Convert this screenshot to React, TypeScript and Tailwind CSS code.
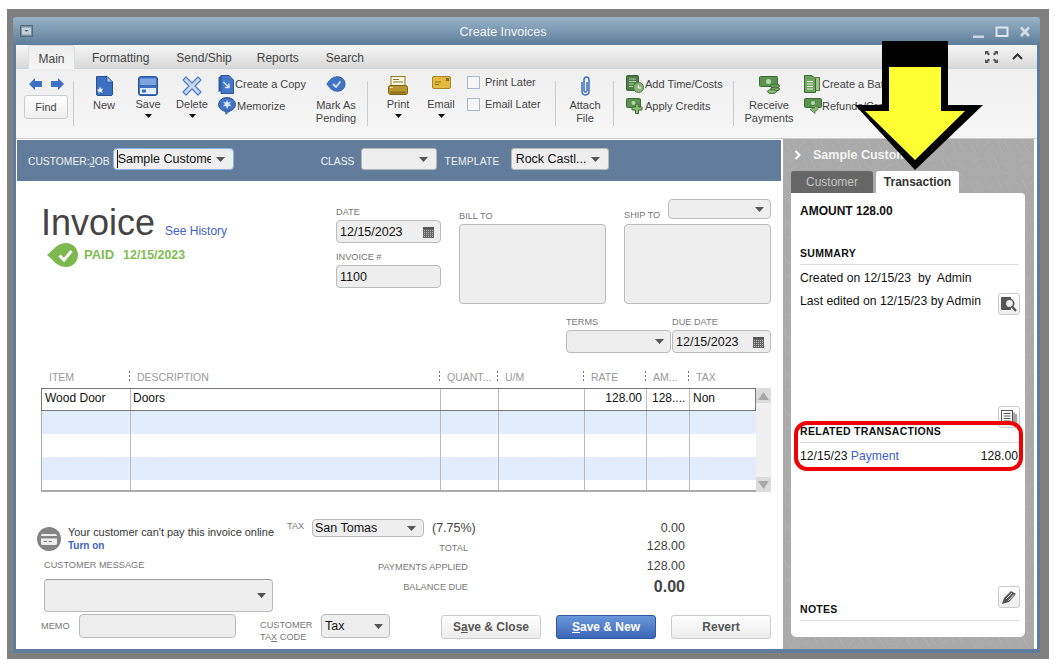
import React from "react";

const Caret = ({ className = "" }: { className?: string }) => (
  <svg width="9" height="5" viewBox="0 0 9 5" className={className}>
    <path d="M0 0H9L4.5 5Z" fill="#555" />
  </svg>
);

const SmallCaret = () => (
  <svg width="7" height="4" viewBox="0 0 7 4" className="mt-[3px]">
    <path d="M0 0H7L3.5 4Z" fill="#111" />
  </svg>
);

const Calendar = () => (
  <svg width="11" height="11" viewBox="0 0 11 11">
    <rect width="11" height="11" fill="#666" />
    <rect y="0" width="11" height="2" fill="#555" />
    {[3, 5, 7, 9].map((y) =>
      [1, 3, 5, 7, 9].map((x) => <rect key={`${x}-${y}`} x={x} y={y} width="1" height="1" fill="#bbb" />)
    )}
  </svg>
);

const Sep = ({ className = "" }: { className?: string }) => (
  <div className={`w-px h-[45px] mt-[12px] bg-[#ccc] shrink-0 ${className}`} />
);

const BlueDoc = () => (
  <svg width="17" height="20" viewBox="0 0 17 20">
    <path d="M.5 .5H11L16.5 6V18a1.5 1.5 0 0 1-1.5 1.5H2A1.5 1.5 0 0 1 .5 18Z" fill="#3d6fc0" stroke="#27508f" />
    <path d="M11 .5V6H16.5Z" fill="#a9c4e8" stroke="#27508f" strokeWidth=".6" />
    <path d="M4 10.5L4.8 13 7.4 12.6 5.6 14.4 6.8 17 4.2 15.8 2.4 17.6 2.6 15 .6 13.8 3 13.4Z" fill="#fff" />
  </svg>
);

const Floppy = () => (
  <svg width="20" height="20" viewBox="0 0 20 20">
    <rect x=".5" y=".5" width="19" height="19" rx="2.5" fill="#3b6fc4" stroke="#2a5597" />
    <rect x="2" y="2.5" width="16" height="6.5" fill="#7fa5dd" />
    <rect x="2" y="12" width="16" height="6" fill="#e7eef9" />
    <rect x="4" y="13.5" width="4" height="3" fill="#3b6fc4" />
  </svg>
);

const XIcon = () => (
  <svg width="20" height="20" viewBox="0 0 20 20">
    <path d="M4 1L10 7 16 1 19 4 13 10 19 16 16 19 10 13 4 19 1 16 7 10 1 4Z" fill="#c6d9f3" stroke="#4b7cc4" strokeWidth="1.2" strokeLinejoin="round" />
  </svg>
);

const CopyIcon = () => (
  <svg width="16" height="19" viewBox="0 0 16 19">
    <path d="M.5 2.5L3 .5V16L.5 17Z" fill="#2f5ea8" />
    <path d="M3 .5H11L15.5 5V18.5H3Z" fill="#4478c8" stroke="#2a5597" />
    <path d="M5.5 7L11 12.5M11 8.5V12.5H7" stroke="#dce8f8" strokeWidth="1.4" fill="none" />
  </svg>
);

const MemoIcon = () => (
  <svg width="18" height="18" viewBox="0 0 18 18">
    <ellipse cx="9" cy="7.5" rx="8.5" ry="7" fill="#3f74c4" stroke="#2a5597" />
    <path d="M7 13L8 17.5 12 13.5Z" fill="#3f74c4" stroke="#2a5597" strokeWidth=".6" />
    <path d="M9 2.5L10 5.5 13 4.5 11.2 7 13.5 9 10.5 9 9 12 8 9 4.8 9.4 7 7 5 4.5 8 5.5Z" fill="#dce8f8" />
  </svg>
);

const PendingIcon = () => (
  <svg width="20" height="16" viewBox="0 0 20 16">
    <path d="M1 8C3 5 6 1 11 .8 15 .6 19 3 19 8 19 13 15 15.4 11 15.2 6 15 3 11 1 8Z" fill="#3f74c4" stroke="#2f5ea8" />
    <path d="M7 8L10 11 14.5 5.5" stroke="#d6e4f7" strokeWidth="1.8" fill="none" />
  </svg>
);

const PrintIcon = () => (
  <svg width="20" height="20" viewBox="0 0 20 20">
    <rect x="3" y=".5" width="14" height="10" fill="#fdf6d8" stroke="#97761e" />
    <path d="M5 3.5H11M5 6H15" stroke="#8a7640" />
    <rect x=".5" y="9.5" width="19" height="9" rx="2" fill="#b8952e" stroke="#7a6118" />
    <rect x="2" y="11" width="3" height="1" fill="#f4e6a8" />
    <rect x="2" y="15.5" width="16" height="2" fill="#8c7020" />
  </svg>
);

const EnvelopeIcon = () => (
  <svg width="19" height="13" viewBox="0 0 19 13">
    <rect x=".5" y=".5" width="18" height="12" rx="1.5" fill="#e3b93f" stroke="#a68526" />
    <rect x="14" y="2" width="3" height="3" fill="#8c6c14" />
    <path d="M3 6H9M3 8.5H7" stroke="#8c6c14" />
  </svg>
);

const ClipIcon = () => (
  <svg width="13" height="21" viewBox="0 0 13 21">
    <path d="M3 6V15.5C3 20 10 20 10 15.5V4C10 0 5 0 5 4V14.5C5 16.5 8 16.5 8 14.5V6" fill="none" stroke="#3b6fc4" strokeWidth="1.5" />
  </svg>
);

const TimeIcon = () => (
  <svg width="18" height="18" viewBox="0 0 18 18">
    <rect x=".5" y=".5" width="12" height="15" rx="1" fill="#4d7c47" stroke="#38603a" />
    <path d="M3 4H10M3 6.5H10M3 9H8M3 11.5H7" stroke="#b6d3ad" />
    <circle cx="12.5" cy="12.5" r="5" fill="#8ab47a" stroke="#4d7c47" />
    <path d="M12.5 10V13H15" stroke="#fff" fill="none" />
  </svg>
);

const CreditIcon = () => (
  <svg width="18" height="17" viewBox="0 0 18 17">
    <rect x=".5" y=".5" width="14" height="9" rx="1" fill="#5d9350" stroke="#3e6a38" />
    <circle cx="7.5" cy="5" r="2" fill="#b9d6ad" />
    <path d="M9.5 6H12.5V9H16V12H12.5V15.5H9.5V12H6V9H9.5Z" fill="#8abf72" stroke="#3e6a38" />
  </svg>
);

const ReceiveIcon = () => (
  <svg width="21" height="18" viewBox="0 0 21 18">
    <rect x=".5" y=".5" width="18" height="10" rx="1" fill="#5d9350" stroke="#3e6a38" />
    <circle cx="9.5" cy="5.5" r="2.5" fill="#b9d6ad" />
    <ellipse cx="16" cy="10" rx="4.5" ry="2" fill="#6ea35c" stroke="#3e6a38" />
    <ellipse cx="16" cy="13" rx="4.5" ry="2" fill="#6ea35c" stroke="#3e6a38" />
    <ellipse cx="13" cy="15.5" rx="4.5" ry="2" fill="#8abf72" stroke="#3e6a38" />
  </svg>
);

const BatchIcon = () => (
  <svg width="16" height="18" viewBox="0 0 16 18">
    <rect x="11" y="2.5" width="4.5" height="13" fill="#9cc48c" stroke="#4d7c47" />
    <path d="M.5 .5H8L11.5 4V17.5H.5Z" fill="#6ea35c" stroke="#3e6a38" />
    <path d="M3 6.5H9M3 9H9M3 11.5H9M3 14H9" stroke="#eaf3e5" />
  </svg>
);

const RefundIcon = () => (
  <svg width="18" height="16" viewBox="0 0 18 16">
    <rect x=".5" y=".5" width="17" height="9" rx="1" fill="#5d9350" stroke="#3e6a38" />
    <circle cx="9" cy="5" r="2" fill="#b9d6ad" />
    <path d="M5 8H11C15 8 15 13 11 13V15.5L6 11.5 11 9.5" fill="#8abf72" stroke="#3e6a38" strokeWidth=".7" />
  </svg>
);

const Arrow = ({ dir }: { dir: "l" | "r" }) => (
  <svg width="13" height="12" viewBox="0 0 13 12">
    <path d={dir === "l" ? "M0 6L6 0V3H13V9H6V12Z" : "M13 6L7 0V3H0V9H7V12Z"} fill="#3d71c4" />
  </svg>
);

const Col = ({ className, icon, lines, caret }: { className: string; icon: React.ReactNode; lines: string[]; caret?: boolean }) => (
  <div className={`flex flex-col items-center shrink-0 ${className}`}>
    <div className="h-[22px] pt-[7px] flex items-start justify-center box-content">{icon}</div>
    <div className={`${caret ? "mt-0" : "mt-[1px]"} text-[11px] leading-[13px] text-center text-[#444] whitespace-nowrap`}>
      {lines.map((l) => (
        <div key={l}>{l}</div>
      ))}
    </div>
    {caret && <SmallCaret />}
  </div>
);

const Inline = ({ icon, text, iconBox = "w-[19px]" }: { icon: React.ReactNode; text: string; iconBox?: string }) => (
  <div className="flex items-center h-[22px] whitespace-nowrap text-[11px] text-[#444]">
    <div className={`${iconBox} flex justify-start`}>{icon}</div>
    <span>{text}</span>
  </div>
);

const Label = ({ children, className = "" }: { children: React.ReactNode; className?: string }) => (
  <div className={`text-[9.2px] leading-[14px] text-[#777] whitespace-nowrap ${className}`}>{children}</div>
);

const Field = ({ className = "", children }: { className?: string; children?: React.ReactNode }) => (
  <div className={`bg-[#eeeeee] border border-[#bbb] rounded-[4px] flex items-center text-[12.5px] text-[#111] whitespace-nowrap overflow-hidden ${className}`}>
    {children}
  </div>
);

const BarSelect = ({ className, children }: { className: string; children?: React.ReactNode }) => (
  <div className={`h-[22px] bg-[#eeeeee] flex items-center justify-between pr-[8px] text-[12.5px] text-[#111] whitespace-nowrap ${className}`}>
    {children}
    <Caret className="shrink-0 ml-auto" />
  </div>
);

const headCols = ["w-[89px]", "w-[310px]", "w-[58px]", "w-[86px]", "w-[62px]", "w-[43px]", "w-[67px]"];
const rowCols = ["w-[88px]", "w-[310px]", "w-[58px]", "w-[86px]", "w-[62px]", "w-[43px]", "w-[66px]"];
const cellPad = ["pl-[3px]", "pl-[2px]", "", "", "pr-[4px] text-right", "pl-[5px]", "pl-[3px]"];
const heads = ["ITEM", "DESCRIPTION", "QUANT...", "U/M", "RATE", "AM...", "TAX"];
const cells = ["Wood Door", "Doors", "", "", "128.00", "128....", "Non"];

const Dots = () => (
  <div className="absolute left-[-1px] top-[1px] flex flex-col gap-[2px]">
    <div className="w-px h-[2px] bg-[#777]" />
    <div className="w-px h-[2px] bg-[#777]" />
    <div className="w-px h-[2px] bg-[#777]" />
  </div>
);

const TableRow = ({ h, bg }: { h: string; bg: string }) => (
  <div className={`flex ${h} ${bg}`}>
    {rowCols.map((c, i) => (
      <div key={c} className={`${c} ${i > 0 ? "border-l border-[#bbb]" : ""}`} />
    ))}
  </div>
);

const SideButton = ({ children, className = "" }: { children: React.ReactNode; className?: string }) => (
  <div className={`w-[22px] h-[22px] border border-[#ccc] rounded-[3px] bg-gradient-to-b from-white to-[#eee] flex items-center justify-center shrink-0 ${className}`}>
    {children}
  </div>
);

const Heading = ({ children, className = "" }: { children: React.ReactNode; className?: string }) => (
  <div className={`text-[10.5px] leading-[14px] h-[19px] font-bold text-[#111] tracking-[0.3px] border-b border-[#ddd] ${className}`}>
    {children}
  </div>
);

export default function App() {
  return (
    <div className="relative w-[1058px] h-[668px] bg-white pt-[9px] pl-[7px] overflow-hidden font-['Liberation_Sans',Arial,sans-serif]">
      <div className="w-[1042px] h-[650px] bg-[#808080] pt-[8px] pl-[6px]">
        <div className="w-[1027px] h-[636px] bg-[#617d9c] rounded-t-[3px] px-[3px] pb-[4px] flex flex-col">
          {/* title bar */}
          <div className="-mx-[3px] h-[28px] shrink-0 rounded-t-[3px] bg-gradient-to-b from-[#96b3c9] to-[#5f7e9a] flex items-center pl-[7px] pt-[2px] relative">
            <svg width="13" height="12" viewBox="0 0 13 12" className="-mt-[2px]">
              <rect x=".5" y=".5" width="12" height="11" fill="#7d8f9e" stroke="#55697a" />
              <rect x="2" y="2.5" width="9" height="7" fill="#c4d0da" />
              <path d="M4.5 5H8.5L6.5 7Z" fill="#4f6274" />
            </svg>
            <div className="flex-1 text-center text-[12.5px] text-[#f0f4f7]">Create Invoices</div>
            <div className="flex items-center pr-[7px]">
              <svg width="60" height="12" viewBox="0 0 60 12">
                <rect x="0" y="9.5" width="11" height="2.5" fill="#c9d6e0" />
                <rect x="23.5" y="1.5" width="11" height="8.5" fill="none" stroke="#dfe6ec" strokeWidth="2" />
                <path d="M48 1.5L56 10M56 1.5L48 10" stroke="#d3dde5" strokeWidth="2.6" />
              </svg>
            </div>
          </div>

          <div className="flex-1 bg-white flex flex-col min-h-0">
            {/* tabs */}
            <div className="h-[24px] shrink-0 bg-gradient-to-b from-[#f6f6f6] to-[#d9d9d9] flex items-end pl-[12px] text-[12px] text-[#444] relative border-b border-[#c8d3dd]">
              <div className="w-[47px] h-[24px] -mb-px pt-[2px] bg-gradient-to-b from-[#eeeeee] to-[#f5f5f5] border border-b-0 border-[#dcdcdc] rounded-t-[3px] flex items-center justify-center">Main</div>
              <div className="ml-[17px] h-[23px] pt-[2px] flex items-center">Formatting</div>
              <div className="ml-[27px] h-[23px] pt-[2px] flex items-center">Send/Ship</div>
              <div className="ml-[25px] h-[23px] pt-[2px] flex items-center">Reports</div>
              <div className="ml-[27px] h-[23px] pt-[2px] flex items-center">Search</div>
              <div className="ml-auto mr-[14px] h-[23px] flex items-center gap-[14px]">
                <svg width="13" height="12" viewBox="0 0 13 12">
                  <path d="M0 0H4L3 1 5 3 3.5 4.5 1.5 2.5 0 4ZM13 0H9L10 1 8 3 9.5 4.5 11.5 2.5 13 4ZM0 12H4L3 11 5 9 3.5 7.5 1.5 9.5 0 8ZM13 12H9L10 11 8 9 9.5 7.5 11.5 9.5 13 8Z" fill="#555" />
                </svg>
                <svg width="11" height="7" viewBox="0 0 11 7">
                  <path d="M1 6L5.5 1.5 10 6" stroke="#333" strokeWidth="2" fill="none" />
                </svg>
              </div>
            </div>

            {/* toolbar */}
            <div className="h-[69px] shrink-0 bg-gradient-to-b from-[#f0f0f0] to-[#f6f6f6] border-b border-[#ccc] flex items-start pl-[8px] box-content">
              <div className="w-[44px] shrink-0 flex flex-col items-center">
                <div className="mt-[9px] flex gap-[9px] h-[12px]">
                  <Arrow dir="l" />
                  <Arrow dir="r" />
                </div>
                <div className="mt-[5px] w-[44px] h-[24px] pt-px border border-[#ccc] rounded-[3px] bg-gradient-to-b from-white to-[#efefef] text-[11px] text-[#444] flex items-center justify-center">Find</div>
              </div>
              <Sep className="ml-[5px]" />
              <Col className="ml-[10px] w-[40px]" icon={<BlueDoc />} lines={["New"]} />
              <Col className="ml-[4px] w-[40px]" icon={<Floppy />} lines={["Save"]} caret />
              <Col className="ml-[2px] w-[44px]" icon={<XIcon />} lines={["Delete"]} caret />
              <div className="ml-[4px] w-[88px] shrink-0 pt-[4px]">
                <Inline icon={<CopyIcon />} text="Create a Copy" />
                <Inline icon={<MemoIcon />} text="Memorize" />
              </div>
              <Col className="w-[60px]" icon={<PendingIcon />} lines={["Mark As", "Pending"]} />
              <Sep className="ml-[1px]" />
              <Col className="ml-[10px] w-[40px]" icon={<PrintIcon />} lines={["Print"]} caret />
              <Col className="ml-[3px] w-[40px]" icon={<EnvelopeIcon />} lines={["Email"]} caret />
              <div className="ml-[6px] w-[88px] shrink-0 pt-[2px] text-[11px] text-[#444]">
                <div className="flex items-center h-[22px] gap-[5px]">
                  <div className="w-[13px] h-[13px] border border-[#aab7d0] bg-[#f7f7f7]" />
                  <span>Print Later</span>
                </div>
                <div className="flex items-center h-[22px] gap-[5px]">
                  <div className="w-[13px] h-[13px] border border-[#aab7d0] bg-[#f7f7f7]" />
                  <span>Email Later</span>
                </div>
              </div>
              <Sep />
              <Col className="ml-[7px] w-[44px]" icon={<ClipIcon />} lines={["Attach", "File"]} />
              <Sep className="ml-[6px]" />
              <div className="ml-[12px] w-[107px] shrink-0 pt-[4px]">
                <Inline icon={<TimeIcon />} text="Add Time/Costs" />
                <Inline icon={<CreditIcon />} text="Apply Credits" />
              </div>
              <Sep />
              <Col className="ml-[5px] w-[60px]" icon={<ReceiveIcon />} lines={["Receive", "Payments"]} />
              <div className="ml-[5px] shrink-0 pt-[4px]">
                <Inline iconBox="w-[18px]" icon={<BatchIcon />} text="Create a Batch" />
                <Inline iconBox="w-[18px]" icon={<RefundIcon />} text="Refunds/Credits" />
              </div>
            </div>

            {/* body */}
            <div className="flex-1 flex min-h-0 pl-px">
              {/* form */}
              <div className="w-[764px] shrink-0 flex flex-col">
                <div className="mt-px h-[41px] shrink-0 bg-[#627d9c] flex items-start pl-[11px] text-[10.3px] text-[#eef2f6]">
                  <span className="mt-[14px]">
                    CUSTOMER:<span className="underline">J</span>OB
                  </span>
                  <BarSelect className="ml-[3px] mt-[8px] w-[121px] border border-[#8fb3e6] rounded-[4px] pl-[3px]">
                    <span className="w-[94px] overflow-hidden border-l border-[#111]">Sample Customer</span>
                  </BarSelect>
                  <span className="ml-[87px] mt-[14px]">CLASS</span>
                  <BarSelect className="ml-[7px] mt-[8px] w-[76px] border border-[#b5b5b5] rounded-[3px]" />
                  <span className="ml-[7px] mt-[14px] tracking-[0.2px]">TEMPLATE</span>
                  <BarSelect className="ml-[11px] mt-[8px] w-[98px] pl-[4px] border border-[#b5b5b5] rounded-[3px]">
                    <span>Rock Castl...</span>
                  </BarSelect>
                </div>

                <div className="flex-1 pl-[24px] flex flex-col min-h-0">
                  <div className="flex">
                    <div className="w-[295px] shrink-0">
                      <div className="mt-[22px] flex items-baseline gap-[10px]">
                        <span className="text-[36px] leading-[40px] text-[#444]">Invoice</span>
                        <span className="text-[12px] text-[#3f5fc6]">See History</span>
                      </div>
                      <div className="ml-[6px] h-[24px] flex items-center">
                        <svg width="31" height="24" viewBox="0 0 31 24">
                          <path d="M0 12C5 9 9 0 19 0A12 12 0 0 1 19 24C9 24 5 15 0 12Z" fill="#7cb84e" />
                          <path d="M12.5 12.5L17 17 24.5 8" stroke="#fff" strokeWidth="3" fill="none" />
                        </svg>
                        <span className="ml-[6px] text-[13px] font-bold text-[#7fbc52]">PAID</span>
                        <span className="ml-[9px] text-[12.4px] font-bold text-[#7fbc52]">12/15/2023</span>
                      </div>
                    </div>
                    <div className="w-[105px] shrink-0 pt-[24px]">
                      <Label className="mb-px">DATE</Label>
                      <Field className="h-[23px] pl-[3px] pr-[6px] pt-[2px] justify-between">
                        <span>12/15/2023</span>
                        <Calendar />
                      </Field>
                      <Label className="mt-[7px] mb-px">INVOICE #</Label>
                      <Field className="h-[23px] pl-[3px] pt-[2px]">1100</Field>
                    </div>
                    <div className="ml-[18px] w-[147px] shrink-0 pt-[28px]">
                      <Label className="mb-px">BILL TO</Label>
                      <Field className="h-[80px]" />
                    </div>
                    <div className="ml-[18px] w-[147px] shrink-0 pt-[18px]">
                      <div className="h-[25px] flex justify-between items-start">
                        <Label className="mt-[9px]">SHIP TO</Label>
                        <Field className="w-[103px] h-[20px] justify-end pr-[6px]">
                          <Caret />
                        </Field>
                      </div>
                      <Field className="h-[80px]" />
                    </div>
                  </div>

                  {/* terms */}
                  <div className="mt-[11px] ml-[525px] flex gap-[1px]">
                    <div className="w-[105px]">
                      <Label className="mb-px">TERMS</Label>
                      <Field className="h-[23px] justify-end pr-[6px]">
                        <Caret />
                      </Field>
                    </div>
                    <div className="w-[99px]">
                      <Label className="mb-px">DUE DATE</Label>
                      <Field className="h-[23px] pl-[3px] pr-[6px] pt-[2px] justify-between">
                        <span>12/15/2023</span>
                        <Calendar />
                      </Field>
                    </div>
                  </div>

                  {/* table header */}
                  <div className="mt-[17px] flex h-[14px] text-[10.5px] leading-[14px] text-[#999]">
                    {heads.map((h, i) => (
                      <div key={h} className={`${headCols[i]} relative ${i > 0 ? "pl-[7px]" : "pl-[8px]"} whitespace-nowrap`}>
                        {i > 0 && <Dots />}
                        {h}
                      </div>
                    ))}
                  </div>

                  {/* table */}
                  <div className="mt-[4px] flex w-[730px] h-[104px]">
                    <div className="w-[715px] border-l border-b-2 border-t border-[#aaa]">
                      <div className="flex h-[23px] border border-[#777] -ml-px -mt-px bg-white w-[715px] text-[12px] text-[#111] leading-[18px]">
                        {rowCols.map((c, i) => (
                          <div
                            key={c}
                            className={`${c} ${i > 0 ? "border-l border-[#bbb]" : ""} ${cellPad[i]} whitespace-nowrap overflow-hidden`}
                          >
                            {cells[i]}
                          </div>
                        ))}
                      </div>
                      <TableRow h="h-[23px]" bg="bg-[#e1ecfc]" />
                      <TableRow h="h-[23px]" bg="bg-white" />
                      <TableRow h="h-[23px]" bg="bg-[#e1ecfc]" />
                      <TableRow h="h-[10px]" bg="bg-white" />
                    </div>
                    <div className="w-[15px] bg-[#f0f0f0] flex flex-col justify-between">
                      <div className="h-[15px] bg-[#dcdcdc] flex items-center justify-center">
                        <svg width="11" height="8" viewBox="0 0 11 8"><path d="M5.5 0L11 8H0Z" fill="#a8a8a8" /></svg>
                      </div>
                      <div className="h-[15px] bg-[#dcdcdc] flex items-center justify-center">
                        <svg width="11" height="8" viewBox="0 0 11 8"><path d="M5.5 8L11 0H0Z" fill="#a8a8a8" /></svg>
                      </div>
                    </div>
                  </div>

                  {/* footer A */}
                  <div className="flex">
                    <div className="w-[246px] shrink-0">
                      <div className="mt-[33px] -ml-[4px] flex items-center h-[28px]">
                        <svg width="24" height="24" viewBox="0 0 24 24" className="shrink-0">
                          <circle cx="12" cy="12" r="12" fill="#848484" />
                          <rect x="4" y="7" width="16" height="11" rx="1.5" fill="#efefef" />
                          <rect x="4" y="9" width="16" height="2.4" fill="#848484" />
                          <path d="M6.5 14.5H10M11.5 14.5H15" stroke="#848484" />
                        </svg>
                        <div className="ml-[7px] whitespace-nowrap">
                          <div className="text-[10.95px] leading-[14px] text-[#333]">Your customer can't pay this invoice online</div>
                          <div className="text-[10px] leading-[14px] font-bold text-[#3f5fc6]">Turn on</div>
                        </div>
                      </div>
                      <Label className="mt-[5px] ml-[3px]">CUSTOMER MESSAGE</Label>
                      <Field className="mt-[7px] ml-[3px] w-[229px] h-[33px] justify-end pr-[6px] border-t-[#999]">
                        <Caret />
                      </Field>
                    </div>
                    <div className="w-[398px] shrink-0">
                      <div className="mt-[27px] flex items-center h-[18px]">
                        <Label className="w-[25px] -mt-[5px]">TAX</Label>
                        <Field className="w-[112px] h-[18px] pl-[2px] pr-[7px] justify-between">
                          <span>San Tomas</span>
                          <Caret />
                        </Field>
                        <span className="ml-[8px] text-[12.5px] text-[#444]">(7.75%)</span>
                        <span className="ml-auto text-[12.5px] text-[#444]">0.00</span>
                      </div>
                      <div className="flex items-center h-[19px]">
                        <Label className="w-[181px] text-right pt-[2px]">TOTAL</Label>
                        <span className="ml-auto text-[12.5px] text-[#444]">128.00</span>
                      </div>
                      <div className="flex items-center h-[20px]">
                        <Label className="w-[181px] text-right pt-px">PAYMENTS APPLIED</Label>
                        <span className="ml-auto text-[12.5px] text-[#444]">128.00</span>
                      </div>
                      <div className="flex items-center h-[22px]">
                        <Label className="w-[181px] text-right">BALANCE DUE</Label>
                        <span className="ml-auto text-[16px] font-bold text-[#444]">0.00</span>
                      </div>
                    </div>
                  </div>

                  {/* footer B */}
                  <div className="mt-[2px] flex items-start">
                    <Label className="w-[38px] pt-[5px]">MEMO</Label>
                    <Field className="w-[157px] h-[24px]" />
                    <div className="ml-[24px] w-[61px] pt-[5px] text-[9.2px] leading-[12px] text-[#777]">
                      <div>CUSTOMER</div>
                      <div>
                        TA<span className="underline">X</span> CODE
                      </div>
                    </div>
                    <Field className="w-[69px] h-[24px] pl-[3px] pr-[6px] justify-between">
                      <span>Tax</span>
                      <Caret />
                    </Field>
                    <div className="ml-[51px] mt-px w-[100px] h-[24px] border border-[#ccc] rounded-[3px] bg-gradient-to-b from-white to-[#ececec] text-[12px] font-bold text-[#555] flex items-center justify-center">
                      <span>
                        S<span className="underline">a</span>ve &amp; Close
                      </span>
                    </div>
                    <div className="ml-[15px] mt-px w-[100px] h-[24px] border border-[#2f5a9c] rounded-[3px] bg-gradient-to-b from-[#6a97da] to-[#3c66b8] text-[12px] font-bold text-white flex items-center justify-center">
                      <span>
                        <span className="underline">S</span>ave &amp; New
                      </span>
                    </div>
                    <div className="ml-[15px] mt-px w-[100px] h-[24px] border border-[#ccc] rounded-[3px] bg-gradient-to-b from-white to-[#ececec] text-[12px] font-bold text-[#555] flex items-center justify-center">
                      Revert
                    </div>
                  </div>
                </div>
              </div>

              {/* right panel */}
              <div className="ml-[2px] w-[251px] shrink-0 bg-[#aaaaaa] relative overflow-hidden flex flex-col">
                <svg className="absolute inset-0 w-full h-full" aria-hidden="true">
                  <defs>
                    <pattern id="leafy" width="46" height="38" patternUnits="userSpaceOnUse">
                      <path d="M3 5L9 14M9 3L14 12M16 8L22 2M20 12L27 6M31 3L35 13M37 2L42 11M4 24L12 20M8 30L16 25M21 20L25 30M27 18L31 28M35 24L43 30M33 32L41 36" stroke="#b2b2b2" strokeWidth="1" fill="none" />
                    </pattern>
                  </defs>
                  <rect width="100%" height="100%" fill="url(#leafy)" />
                </svg>
                <div className="relative h-[32px] shrink-0 pl-[11px] flex items-center text-[12.5px] font-bold text-[#f4f4f4]">
                  <svg width="8" height="10" viewBox="0 0 8 10">
                    <path d="M1.5 1L5.5 5 1.5 9" stroke="#fff" strokeWidth="2" fill="none" />
                  </svg>
                  <span className="ml-[11px] whitespace-nowrap">Sample Customer</span>
                </div>
                <div className="relative ml-[8px] flex h-[22px] shrink-0 text-[12px]">
                  <div className="w-[82px] bg-[#666] rounded-t-[3px] text-[#c4c4c4] flex items-center justify-center">Customer</div>
                  <div className="ml-[3px] w-[83px] bg-white rounded-t-[3px] font-bold text-[#333] flex items-center justify-center">Transaction</div>
                </div>
                <div className="relative ml-[8px] w-[234px] h-[444px] shrink-0 bg-white rounded-b-[5px] rounded-tr-[4px] pl-[9px] pr-[6px] pt-[10px] text-[12.2px] text-[#111] flex flex-col">
                  <div className="h-[16px] leading-[16px] font-bold text-[12px]">AMOUNT 128.00</div>
                  <Heading className="mt-[27px]">SUMMARY</Heading>
                  <div className="mt-[5px] h-[14px] leading-[16px] whitespace-pre">Created on 12/15/23  by  Admin</div>
                  <div className="mt-[9px] flex justify-between items-start whitespace-nowrap">
                    <span className="leading-[16px]">Last edited on 12/15/23 by Admin</span>
                    <SideButton className="-mr-px">
                      <svg width="16" height="15" viewBox="0 0 16 15">
                        <rect x="0" y="0" width="10" height="13" rx="1" fill="#555" />
                        <circle cx="8.5" cy="6.5" r="4.2" fill="#eee" stroke="#555" strokeWidth="1.6" />
                        <path d="M11.5 10L15 14" stroke="#555" strokeWidth="2.2" />
                      </svg>
                    </SideButton>
                  </div>
                  <SideButton className="mt-[91px] self-end -mr-px">
                    <svg width="16" height="15" viewBox="0 0 16 15">
                      <rect x=".5" y=".5" width="11" height="14" fill="#fff" stroke="#555" />
                      <path d="M2.5 3.5H9.5M2.5 6H9.5M2.5 8.5H9.5M2.5 11H9.5" stroke="#555" />
                      <path d="M13 2.5V14.5M15 4V14.5" stroke="#555" />
                    </svg>
                  </SideButton>
                  <Heading className="-mt-[4px]">RELATED TRANSACTIONS</Heading>
                  <div className="mt-[5px] h-[14px] leading-[16px] flex justify-between pr-px">
                    <span>
                      12/15/23 <span className="text-[#3f5fc6]">Payment</span>
                    </span>
                    <span>128.00</span>
                  </div>
                  <SideButton className="mt-[124px] self-end -mr-px">
                    <svg width="16" height="15" viewBox="0 0 16 15">
                      <path d="M1 14L3 8 10 1 15 4 8 12Z" fill="#555" />
                      <path d="M5 9L11 3M7.5 10.5L13 4.5" stroke="#eee" />
                    </svg>
                  </SideButton>
                  <Heading className="-mt-[6px]">NOTES</Heading>
                </div>
              </div>
            </div>
          </div>
        </div>
      </div>

      {/* annotations lying over the screenshot */}
      <div className="absolute left-[794px] top-[421px] w-[229px] h-[50px] border-[4px] border-[#f00000] rounded-[13px]" />
      <svg className="absolute left-[850px] top-[38px]" width="140" height="136" viewBox="0 0 140 136">
        <path d="M32 3H98V67H133L65 132 5 67H32Z" fill="#000" />
        <path d="M39 29H91V73H115L65 122 15 73H39Z" fill="#ffff33" />
      </svg>
    </div>
  );
}
